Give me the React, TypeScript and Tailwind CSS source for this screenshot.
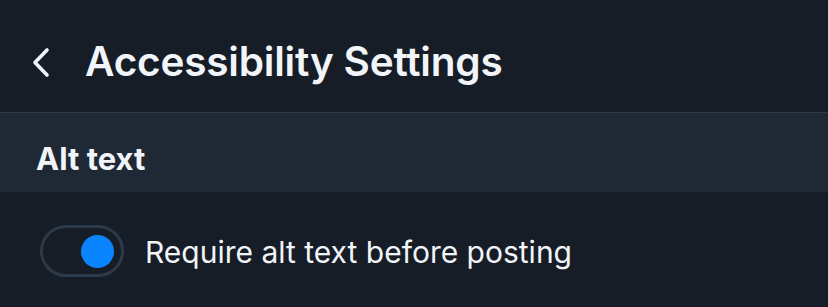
export default function App() {
  return (
    <div
      className="w-[828px] h-[307px] bg-[#161d27] text-[#f1f4f8] overflow-hidden"
      style={{ fontFamily: "Inter, 'Noto Sans', sans-serif" }}
    >
      {/* Header */}
      <div className="h-[113px] flex items-center pl-[31px] pt-[12px] border-b border-[#2c3948]">
        <svg width="20" height="31" viewBox="0 0 20 31" fill="none" className="mr-[34px]">
          <path d="M16 3 L4 15.5 L16 28" stroke="#f1f4f8" strokeWidth="3.6" strokeLinecap="round" strokeLinejoin="round" />
        </svg>
        <h1 className="text-[40.5px] font-semibold tracking-[-0.2px] leading-none">Accessibility Settings</h1>
      </div>

      {/* Section header */}
      <div className="h-[79px] bg-[#1e2935] flex items-center pl-[36px] pt-[12px]">
        <h2 className="text-[31px] font-bold leading-none">Alt text</h2>
      </div>

      {/* Row */}
      <div className="flex items-center pl-[40px] pt-[33px]">
        <button className="w-[84px] h-[52px] rounded-full border-[3px] border-[#2c3948] flex items-center justify-end pr-[7px]">
          <span className="w-[33px] h-[33px] rounded-full bg-[#0a84ff]" />
        </button>
        <span className="ml-[21px] text-[30px] leading-none mt-[2px]">Require alt text before posting</span>
      </div>
    </div>
  );
}
